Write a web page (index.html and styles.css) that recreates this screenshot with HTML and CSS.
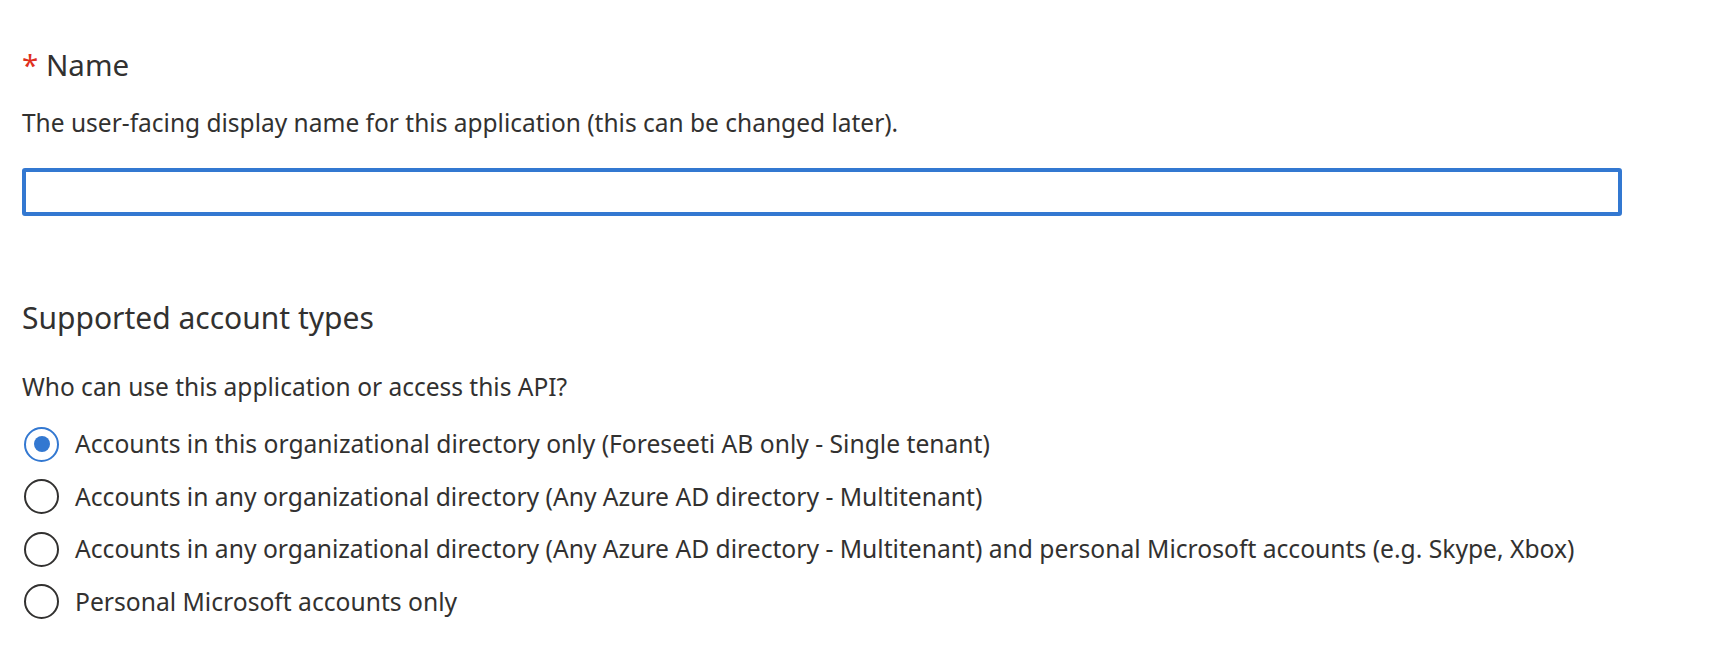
FILE: index.html
```html
<!DOCTYPE html>
<html lang="en">
<head>
<meta charset="utf-8">
<title>Register an application</title>
<link rel="stylesheet" href="styles.css">
</head>
<body>
<main class="form">
  <div class="field">
    <label class="label" for="app-name"><span class="req">*</span> Name</label>
    <p class="desc">The user-facing display name for this application (this can be changed later).</p>
    <input class="text-input" id="app-name" type="text">
  </div>
  <section class="section">
    <h2 class="section-title">Supported account types</h2>
    <p class="question">Who can use this application or access this API?</p>
    <div class="radio-group" role="radiogroup">
      <label class="radio-row"><span class="radio checked"></span><span class="radio-text">Accounts in this organizational directory only (Foreseeti AB only - Single tenant)</span></label>
      <label class="radio-row"><span class="radio"></span><span class="radio-text">Accounts in any organizational directory (Any Azure AD directory - Multitenant)</span></label>
      <label class="radio-row"><span class="radio"></span><span class="radio-text">Accounts in any organizational directory (Any Azure AD directory - Multitenant) and personal Microsoft accounts (e.g. Skype, Xbox)</span></label>
      <label class="radio-row"><span class="radio"></span><span class="radio-text">Personal Microsoft accounts only</span></label>
    </div>
  </section>
</main>
</body>
</html>
```
FILE: styles.css
```css
html, body {
  margin: 0;
  background: #ffffff;
}
body {
  font-family: "Noto Sans", "Open Sans", sans-serif;
  color: #323130;
}
.form {
  padding: 45px 0 0 22px;
}
.label {
  display: block;
  font-size: 29.5px;
  line-height: 40px;
}
.req {
  color: #e0301e;
}
.desc {
  margin: 21px 0 0;
  font-size: 24.5px;
  line-height: 34px;
}
.text-input {
  display: block;
  box-sizing: border-box;
  width: 1600px;
  height: 48px;
  margin: 28px 0 0;
  padding: 0 12px;
  border: 4px solid #3378d1;
  border-radius: 3px;
  outline: none;
  background: #fff;
  font: inherit;
  font-size: 24.5px;
  color: #323130;
}
.section-title {
  margin: 82px 0 0;
  font-size: 30px;
  font-weight: 400;
  line-height: 40px;
}
.question {
  margin: 32px 0 0;
  font-size: 24.5px;
  line-height: 34px;
}
.radio-group {
  display: flex;
  flex-direction: column;
  margin-top: 14px;
}
.radio-row {
  display: flex;
  align-items: center;
  height: 52.5px;
}
.radio {
  box-sizing: border-box;
  flex: none;
  display: grid;
  place-items: center;
  width: 35px;
  height: 35px;
  margin-left: 2px;
  border: 2px solid #323130;
  border-radius: 50%;
}
.radio.checked {
  border-color: #3378d1;
}
.radio.checked::after {
  content: "";
  width: 16px;
  height: 16px;
  border-radius: 50%;
  background: #3378d1;
}
.radio-text {
  margin-left: 16px;
  font-size: 24.65px;
  line-height: 34px;
}
```
